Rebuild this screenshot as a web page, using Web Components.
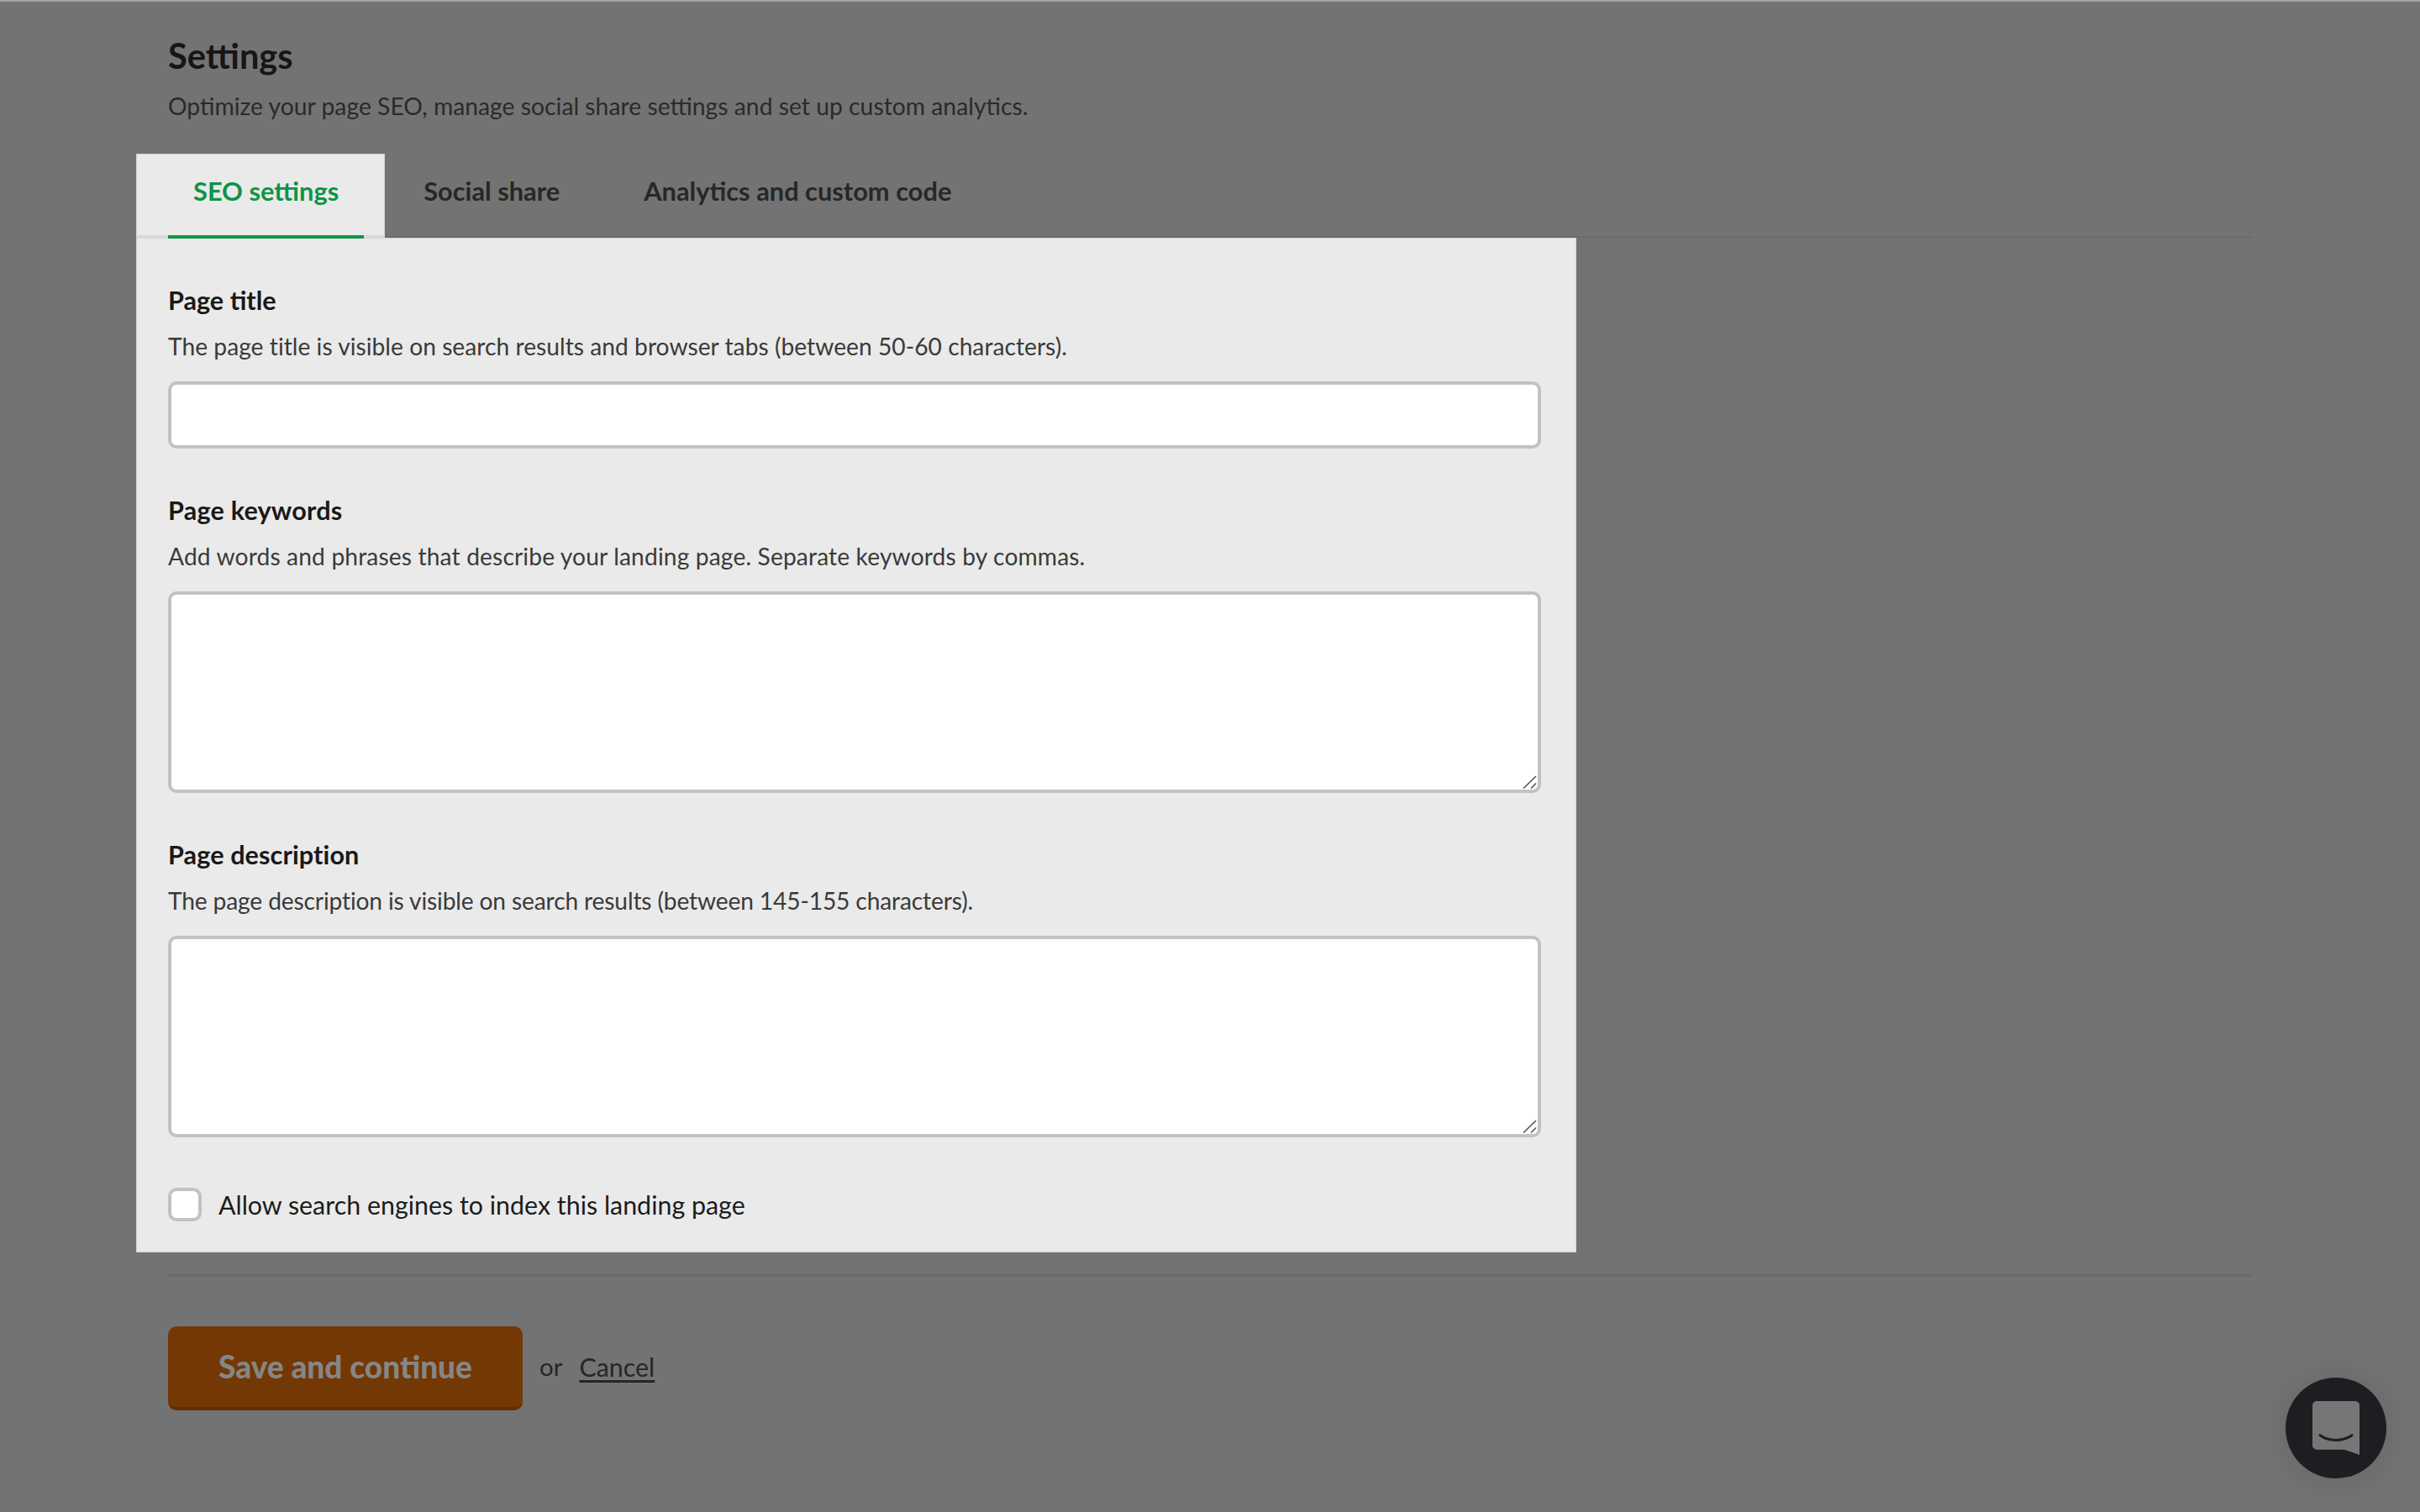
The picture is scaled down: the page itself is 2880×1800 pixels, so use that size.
<!DOCTYPE html>
<html lang="en"><head><meta charset="utf-8"><title>Settings</title>
<style>
html,body{margin:0;padding:0;height:100%;overflow:hidden}
body{background:#737373;font-family:Lato,"Open Sans","Liberation Sans",sans-serif;color:#1b1b1b;border-top:2px solid #a4a4a4;box-sizing:border-box}
</style></head><body>
<template id="t-page"><style>
:host{display:block;padding:0 200px 0;position:relative;height:1798px;box-sizing:border-box}
</style><slot></slot></template>

<template id="t-head"><style>
:host{display:block;height:181px;box-sizing:border-box;padding-top:40px}
h1{margin:0;font:700 41.6px/48px Lato,sans-serif;color:#161616}
p{margin:18px 0 0;font:400 28.3px/36px Lato,sans-serif;color:#2a2a2a}
</style><h1><slot name="title"></slot></h1><p><slot name="sub"></slot></p></template>

<template id="t-tabs"><style>
:host{display:flex;height:100px;margin:0 0 0 -38px;position:relative;box-shadow:inset 0 -3px 0 -1px #6b6b6b;width:2518px}
</style><slot></slot></template>

<template id="t-tab"><style>
:host{display:block;height:100px;box-sizing:border-box;font:700 30.8px/90px Lato,sans-serif;color:#272727}
:host([active]){background:#eaeaea;color:#0e9445;padding:0 25px 0 38px;position:relative;z-index:1;box-shadow:inset 0 -3px 0 #d9d9d9,inset 1px 1px 0 #d4d4d4,inset -1px 0 0 #d4d4d4}
span{display:block;padding:0 0 0 50px;height:100px;box-sizing:border-box}
:host([active]) span{height:101px;padding:0 30px;border-bottom:4px solid #0e9445;margin:0;line-height:90px}
:host([first-after]) span{padding-left:46px;padding-right:50px}
</style><span><slot></slot></span></template>

<template id="t-panel"><style>
:host{display:block;width:1714px;height:1208px;margin-left:-38px;background:#eaeaea;box-sizing:border-box;padding:54px 42px 0 38px;box-shadow:inset 0 0 0 1px #d4d4d4}
</style><slot></slot></template>

<template id="t-field"><style>
:host{display:block}
.l{font:700 30.6px/42px Lato,sans-serif;color:#191919;height:40px}
.d{font:400 28.2px/36px Lato,sans-serif;color:#3a3a3a;margin-top:17px;height:36px}
.c{margin-top:24px}
</style><div class="l"><slot name="label"></slot></div><div class="d"><slot name="desc"></slot></div><div class="c"><slot></slot></div></template>

<template id="t-text"><style>
:host{display:block;margin-bottom:53px}
input{display:block;width:100%;box-sizing:border-box;border:4px solid #c2c2c2;border-radius:10px;background:#fff;outline:0;margin:0;padding:8px;font:400 28px Lato,sans-serif;height:80px}
</style><input type="text" aria-label="field"></template>
<template id="t-area"><style>
:host{display:block;margin-bottom:53px;position:relative}
textarea{display:block;width:100%;height:240px;box-sizing:border-box;border:4px solid #c2c2c2;border-radius:10px;background:#fff;outline:0;margin:0;padding:8px;font:400 28px Lato,sans-serif;resize:none}
svg{position:absolute;right:5px;bottom:5px;display:block}
</style><textarea aria-label="field"></textarea><svg width="17" height="16" viewBox="0 0 17 16"><path d="M1 15.500L16 1M10 15.500L16 9.500" stroke="#555" stroke-width="1.600" fill="none"/></svg></template>

<template id="t-check"><style>
:host{display:flex;align-items:center;gap:20px;margin-top:60px;font:400 30.4px/40px Lato,sans-serif;color:#1c1c1c}
i{display:block;width:40px;height:40px;box-sizing:border-box;border:4px solid #c2c2c2;border-radius:10px;background:#fff}
</style><i></i><span><slot></slot></span></template>

<template id="t-actions"><style>
:host{display:block;border-top:4px solid #6b6b6b;margin-top:25px;padding-top:59px;width:2480px}
.r{display:flex;align-items:center;height:100px;font:400 29.5px/36px Lato,sans-serif;color:#262626}
button{all:unset;box-sizing:border-box;display:block;width:422px;height:100px;border-radius:10px;background:#743805;border-bottom:4px solid #632e03;text-align:center;font:900 37px/88px Lato,sans-serif;color:#868686;margin-right:20px}
.o{margin:0 20px 5px 0}a{color:#262626;text-decoration:underline;text-underline-offset:4px;font-size:30.4px;margin-bottom:5px}
</style><div class="r"><button><slot name="btn"></slot></button><span class="o">or</span><a href="#"><slot name="link"></slot></a></div></template>

<template id="t-chat"><style>
:host{display:block;position:absolute;left:2720px;top:1638px;width:120px;height:120px;border-radius:50%;background:#1e1e22;box-shadow:0 2px 40px rgba(0,0,0,.12)}
svg{display:block;position:absolute;left:32px;top:28px}
</style><svg width="56" height="64" viewBox="0 0 56 64"><path d="M5 0H51A5 5 0 0 1 56 5V64L38 57.700H5A5 5 0 0 1 0 52.700V5A5 5 0 0 1 5 0Z" fill="#767676"/><path d="M9 40.700C20 48.300 36 48.300 47 40.700" fill="none" stroke="#1e1e22" stroke-width="3" stroke-linecap="round"/></svg></template>

<settings-page>
<page-head><span slot="title">Settings</span><span slot="sub">Optimize your page SEO, manage social share settings and set up custom analytics.</span></page-head>
<tab-bar><tab-item active>SEO settings</tab-item><tab-item first-after>Social share</tab-item><tab-item>Analytics and custom code</tab-item></tab-bar>
<seo-panel>
<form-field><span slot="label">Page title</span><span slot="desc" style="letter-spacing:.02px">The page title is visible on search results and browser tabs (between 50-60 characters).</span><text-box></text-box></form-field>
<form-field><span slot="label" style="letter-spacing:.2px">Page keywords</span><span slot="desc" style="letter-spacing:.13px">Add words and phrases that describe your landing page. Separate keywords by commas.</span><area-box></area-box></form-field>
<form-field><span slot="label" style="letter-spacing:.1px">Page description</span><span slot="desc" style="letter-spacing:-.16px">The page description is visible on search results (between 145-155 characters).</span><area-box></area-box></form-field>
<check-row>Allow search engines to index this landing page</check-row>
</seo-panel>
<form-actions><span slot="btn">Save and continue</span><span slot="link">Cancel</span></form-actions>
<chat-launcher></chat-launcher>
</settings-page>
<script>
[['settings-page','t-page'],['page-head','t-head'],['tab-bar','t-tabs'],['tab-item','t-tab'],['seo-panel','t-panel'],['form-field','t-field'],['text-box','t-text'],['area-box','t-area'],['check-row','t-check'],['form-actions','t-actions'],['chat-launcher','t-chat']].forEach(([n,t])=>{
customElements.define(n,class extends HTMLElement{constructor(){super();this.attachShadow({mode:'open'}).appendChild(document.getElementById(t).content.cloneNode(true));}});
});
</script>
</body></html>
